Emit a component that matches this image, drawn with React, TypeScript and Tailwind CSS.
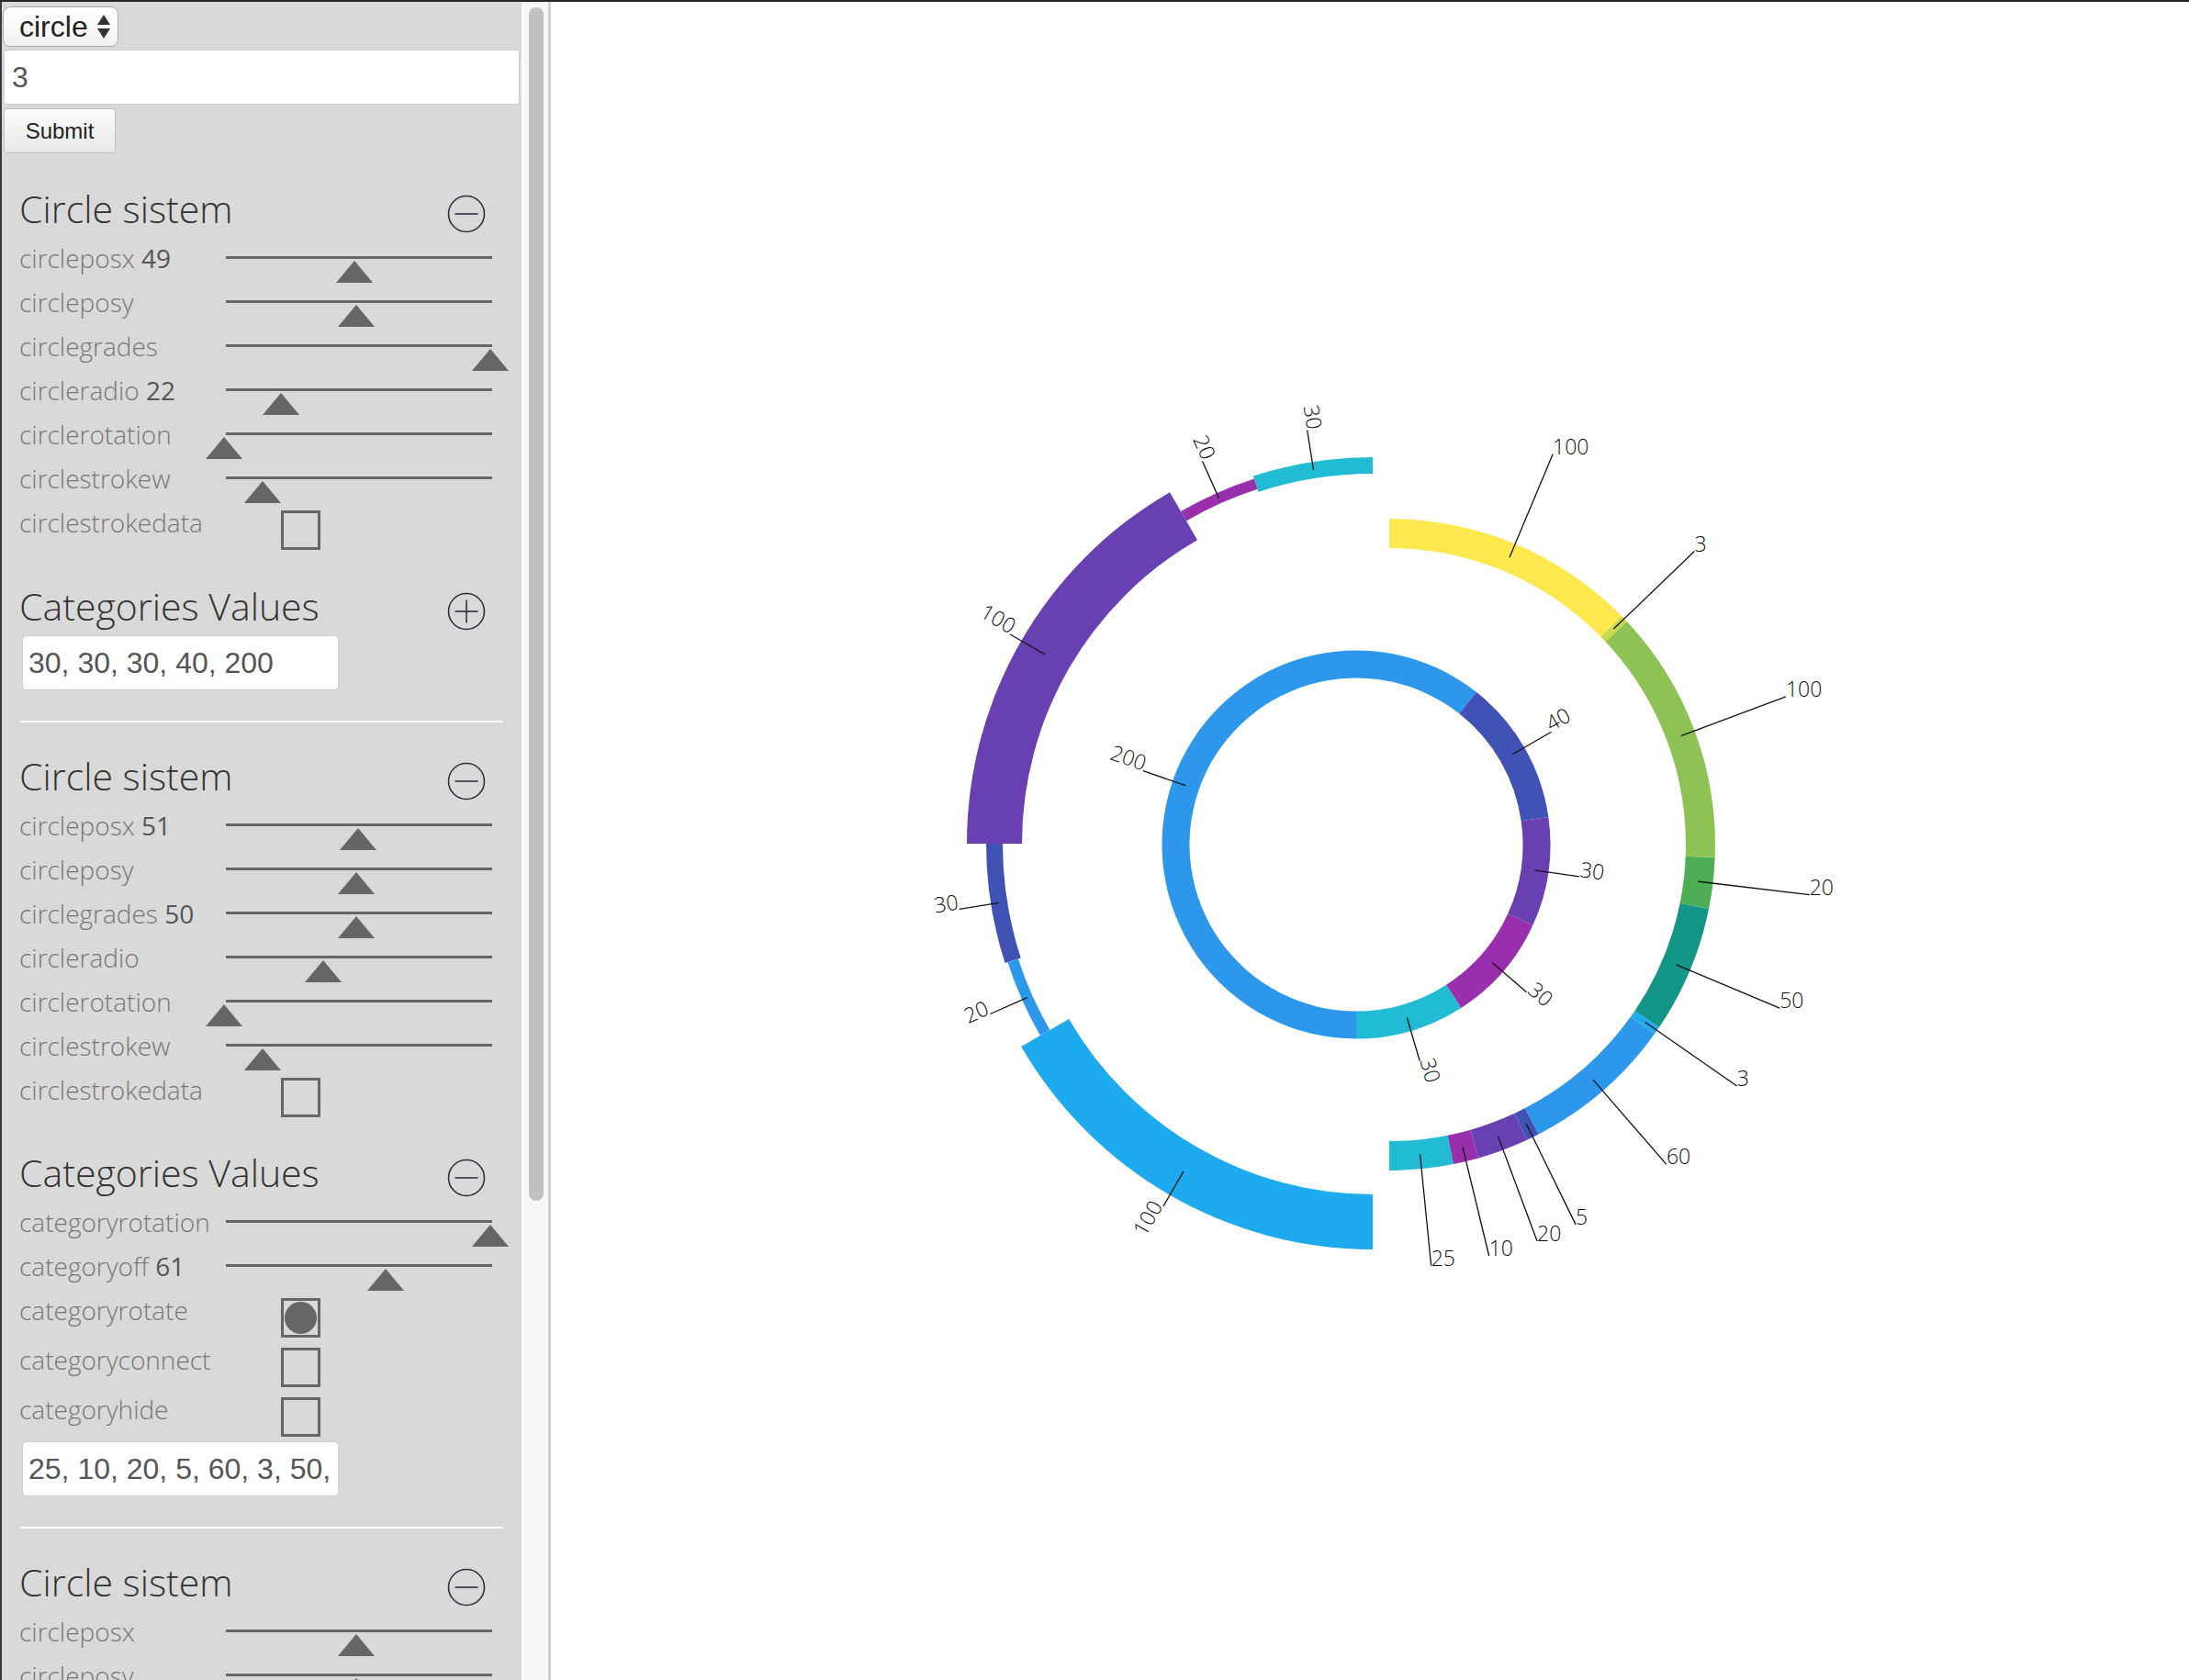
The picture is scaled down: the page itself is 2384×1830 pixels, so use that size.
import React from "react";

type Row =
  | { kind: "slider"; label: string; value?: string; thumb: number }
  | { kind: "check"; label: string; checked?: boolean };

type Ring = {
  cx: number;
  cy: number;
  r: number;
  start: number;
  span: number;
  values: number[];
  colors: string[];
  thick: (v: number) => number;
  lineLen: number;
  flat?: boolean;
};

const pal = {
  cyan: "#21bbd3",
  purple: "#9a2fae",
  deepPurple: "#6840b1",
  indigo: "#4052b3",
  blue: "#2d97ec",
  lightBlue: "#1eaaef",
  teal: "#139688",
  green: "#4eae55",
  lightGreen: "#8ec254",
  lime: "#c9d94a",
  yellow: "#fde84d",
};

// chart rings, angles in degrees clockwise from 12 o'clock
const rings: Ring[] = [
  {
    cx: 895,
    cy: 917,
    r: 412,
    start: 0,
    span: -180,
    values: [30, 20, 100, 30, 20, 100],
    colors: [pal.cyan, pal.purple, pal.deepPurple, pal.indigo, pal.blue, pal.lightBlue],
    thick: (v) => v * 0.6,
    lineLen: 44,
  },
  {
    cx: 913,
    cy: 918,
    r: 339,
    start: 180,
    span: -180,
    values: [25, 10, 20, 5, 60, 3, 50, 20, 100, 3, 100],
    colors: [
      pal.cyan,
      pal.purple,
      pal.deepPurple,
      pal.indigo,
      pal.blue,
      pal.lightBlue,
      pal.teal,
      pal.green,
      pal.lightGreen,
      pal.lime,
      pal.yellow,
    ],
    thick: () => 32,
    lineLen: 122,
    flat: true,
  },
  {
    cx: 877,
    cy: 918,
    r: 196.5,
    start: 180,
    span: -360,
    values: [30, 30, 30, 40, 200],
    colors: [pal.cyan, pal.purple, pal.deepPurple, pal.indigo, pal.blue],
    thick: () => 30,
    lineLen: 49,
  },
];

const pt = (cx: number, cy: number, r: number, a: number): [number, number] => {
  const t = (a * Math.PI) / 180;
  return [cx + r * Math.sin(t), cy - r * Math.cos(t)];
};

function sector(cx: number, cy: number, rIn: number, rOut: number, a0: number, a1: number) {
  const s = Math.min(a0, a1);
  const e = Math.max(a0, a1);
  const large = e - s > 180 ? 1 : 0;
  const p1 = pt(cx, cy, rOut, s);
  const p2 = pt(cx, cy, rOut, e);
  const p3 = pt(cx, cy, rIn, e);
  const p4 = pt(cx, cy, rIn, s);
  return `M${p1[0]} ${p1[1]} A${rOut} ${rOut} 0 ${large} 1 ${p2[0]} ${p2[1]} L${p3[0]} ${p3[1]} A${rIn} ${rIn} 0 ${large} 0 ${p4[0]} ${p4[1]} Z`;
}

const RingView: React.FC<{ ring: Ring }> = ({ ring }) => {
  const total = ring.values.reduce((a, b) => a + b, 0);
  let a = ring.start;
  const parts = ring.values.map((v, i) => {
    const a0 = a;
    const a1 = a + (ring.span * v) / total;
    a = a1;
    const mid = (a0 + a1) / 2;
    const t = ring.thick(v);
    const [x1, y1] = pt(ring.cx, ring.cy, ring.r, mid);
    const [x2, y2] = pt(ring.cx, ring.cy, ring.r + ring.lineLen, mid);
    const m = ((mid % 360) + 360) % 360;
    const right = m < 180;
    const rot = ring.flat ? 0 : right ? m - 90 : m + 90;
    return (
      <g key={i}>
        <path d={sector(ring.cx, ring.cy, ring.r - t / 2, ring.r + t / 2, a0, a1)} fill={ring.colors[i]} />
        <line x1={x1} y1={y1} x2={x2} y2={y2} stroke="#111" strokeWidth={1.3} />
        <text
          x={x2}
          y={y2}
          textAnchor={ring.flat || right ? "start" : "end"}
          transform={`rotate(${rot} ${x2} ${y2})`}
          fontSize={23}
          fontWeight={300}
          fill="#111"
          fontFamily="'Open Sans', sans-serif"
        >
          {v}
        </text>
      </g>
    );
  });
  return <g>{parts}</g>;
};

const CircleIcon: React.FC<{ plus?: boolean }> = ({ plus }) => (
  <svg width="42" height="42" viewBox="0 0 42 42" className="mt-[13px] mr-[7px] shrink-0">
    <circle cx="21" cy="21" r="19.5" fill="none" stroke="#2b3340" strokeWidth="1.6" />
    <line x1="8.5" y1="21" x2="33.5" y2="21" stroke="#2b3340" strokeWidth="1.6" />
    {plus && <line x1="21" y1="8.5" x2="21" y2="33.5" stroke="#2b3340" strokeWidth="1.6" />}
  </svg>
);

const Heading: React.FC<{ title: string; plus?: boolean; className?: string }> = ({ title, plus, className }) => (
  <div className={`flex w-[515px] items-start justify-between ${className ?? ""}`}>
    <div className="whitespace-nowrap font-['Open_Sans',sans-serif] text-[41px] leading-[56px] font-light text-[#333]">
      {title}
    </div>
    <CircleIcon plus={plus} />
  </div>
);

const RowView: React.FC<{ row: Row }> = ({ row }) => {
  const label = (
    <div className="w-[225px] shrink-0 whitespace-nowrap font-['Open_Sans',sans-serif] text-[28px] leading-[46px] font-light text-[#777]">
      {row.label}
      {row.kind === "slider" && row.value && <span className="font-normal text-[#555]"> {row.value}</span>}
    </div>
  );
  if (row.kind === "check") {
    return (
      <div className="flex h-[54px]">
        {label}
        <div className="mt-[10px] ml-[60px] flex h-[43px] w-[43px] items-center justify-center border-[3px] border-[#666]">
          {row.checked && <div className="h-[35px] w-[35px] rounded-full bg-[#666]" />}
        </div>
      </div>
    );
  }
  return (
    <div className="flex h-[48px]">
      {label}
      <div className="relative h-[48px] w-[290px]">
        <div className="absolute top-[21px] left-0 h-[3px] w-[290px] bg-[#666]" />
        <svg
          width="40"
          height="24"
          viewBox="0 0 40 24"
          className="absolute top-[26px]"
          style={{ left: row.thumb - 20 }}
        >
          <polygon points="20,0 40,24 0,24" fill="#666" />
        </svg>
      </div>
    </div>
  );
};

const ValuesInput: React.FC<{ text: string; className?: string }> = ({ text, className }) => (
  <div
    className={`ml-[3px] flex h-[60px] w-[345px] items-center overflow-hidden rounded-[5px] border border-[#cdcdcd] bg-white px-[6px] ${className ?? ""}`}
  >
    <div className="whitespace-nowrap font-['Liberation_Sans',Arial,sans-serif] text-[32px] text-[#555]">{text}</div>
  </div>
);

const circleA: Row[] = [
  { kind: "slider", label: "circleposx", value: "49", thumb: 140 },
  { kind: "slider", label: "circleposy", thumb: 142 },
  { kind: "slider", label: "circlegrades", thumb: 288 },
  { kind: "slider", label: "circleradio", value: "22", thumb: 60 },
  { kind: "slider", label: "circlerotation", thumb: -2 },
  { kind: "slider", label: "circlestrokew", thumb: 40 },
  { kind: "check", label: "circlestrokedata" },
];

const circleB: Row[] = [
  { kind: "slider", label: "circleposx", value: "51", thumb: 144 },
  { kind: "slider", label: "circleposy", thumb: 142 },
  { kind: "slider", label: "circlegrades", value: "50", thumb: 142 },
  { kind: "slider", label: "circleradio", thumb: 106 },
  { kind: "slider", label: "circlerotation", thumb: -2 },
  { kind: "slider", label: "circlestrokew", thumb: 40 },
  { kind: "check", label: "circlestrokedata" },
];

const categoriesB: Row[] = [
  { kind: "slider", label: "categoryrotation", thumb: 288 },
  { kind: "slider", label: "categoryoff", value: "61", thumb: 174 },
  { kind: "check", label: "categoryrotate", checked: true },
  { kind: "check", label: "categoryconnect" },
  { kind: "check", label: "categoryhide" },
];

const circleC: Row[] = [
  { kind: "slider", label: "circleposx", thumb: 142 },
  { kind: "slider", label: "circleposy", thumb: 142 },
  { kind: "slider", label: "circlegrades", thumb: 288 },
  { kind: "slider", label: "circleradio", thumb: 60 },
];

export default function App() {
  return (
    <div className="flex h-[1830px] w-[2384px] overflow-hidden border-t-2 border-[#262626] bg-white">
      {/* Sidebar */}
      <aside className="flex h-full shrink-0 border-l-2 border-[#3a3a3a]">
        <div className="h-full w-[566px] overflow-hidden bg-[#d9d9d9] pt-[5px]">
          {/* shape select */}
          <div className="ml-[1px] flex h-[44px] w-[126px] items-center rounded-[8px] border-[1.5px] border-[#a9a9a9] bg-linear-to-b from-white to-[#f1f1f1] pl-[17px]">
            <span className="font-['Liberation_Sans',Arial,sans-serif] text-[32px] leading-none text-[#222]">circle</span>
            <svg width="16" height="28" viewBox="0 0 16 28" className="ml-[9px]">
              <polygon points="8,1 15,12 1,12" fill="#333" />
              <polygon points="1,16 15,16 8,27" fill="#333" />
            </svg>
          </div>
          <div className="mt-[3px] ml-[2px] flex h-[60px] w-[562px] items-center rounded-[4px] border border-[#cfcfcf] bg-white pl-[8px] font-['Liberation_Sans',Arial,sans-serif] text-[32px] text-[#555]">
            3
          </div>
          <button className="mt-[4px] ml-[2px] flex h-[49px] w-[122px] items-center justify-center rounded-[4px] border border-[#c2c2c2] bg-linear-to-b from-[#fcfcfc] to-[#e8e8e8] font-['Liberation_Sans',Arial,sans-serif] text-[24px] text-[#222]">
            Submit
          </button>

          <div className="pl-[19px]">
            <Heading title="Circle sistem" className="mt-[32px] mb-[3px]" />
            {circleA.map((r, i) => (
              <RowView key={i} row={r} />
            ))}

            <Heading title="Categories Values" plus className="mt-[32px]" />
            <ValuesInput text="30, 30, 30, 40, 200" className="mt-[4px]" />
            <div className="mt-[33px] ml-[1px] h-[2px] w-[526px] bg-white" />

            <Heading title="Circle sistem" className="mt-[30px] mb-[3px]" />
            {circleB.map((r, i) => (
              <RowView key={i} row={r} />
            ))}

            <Heading title="Categories Values" className="mt-[31px] mb-[3px]" />
            {categoriesB.map((r, i) => (
              <RowView key={i} row={r} />
            ))}
            <ValuesInput text="25, 10, 20, 5, 60, 3, 50," className="mt-[4px]" />
            <div className="mt-[33px] ml-[1px] h-[2px] w-[526px] bg-white" />

            <Heading title="Circle sistem" className="mt-[30px] mb-[3px]" />
            {circleC.map((r, i) => (
              <RowView key={i} row={r} />
            ))}
          </div>
        </div>

        {/* scrollbar */}
        <div className="h-full w-[29px] border-l border-[#fdfdfd] bg-[#f7f7f7] pt-[6px] pl-[7px]">
          <div className="h-[1300px] w-[16px] rounded-full bg-[#c1c1c1]" />
        </div>
        <div className="h-full w-[3px] bg-[#d2d2d2]" />
      </aside>

      {/* Chart */}
      <svg width="1784" height="1828" viewBox="0 0 1784 1828" className="shrink-0">
        {rings.map((r, i) => (
          <RingView key={i} ring={r} />
        ))}
      </svg>
    </div>
  );
}
